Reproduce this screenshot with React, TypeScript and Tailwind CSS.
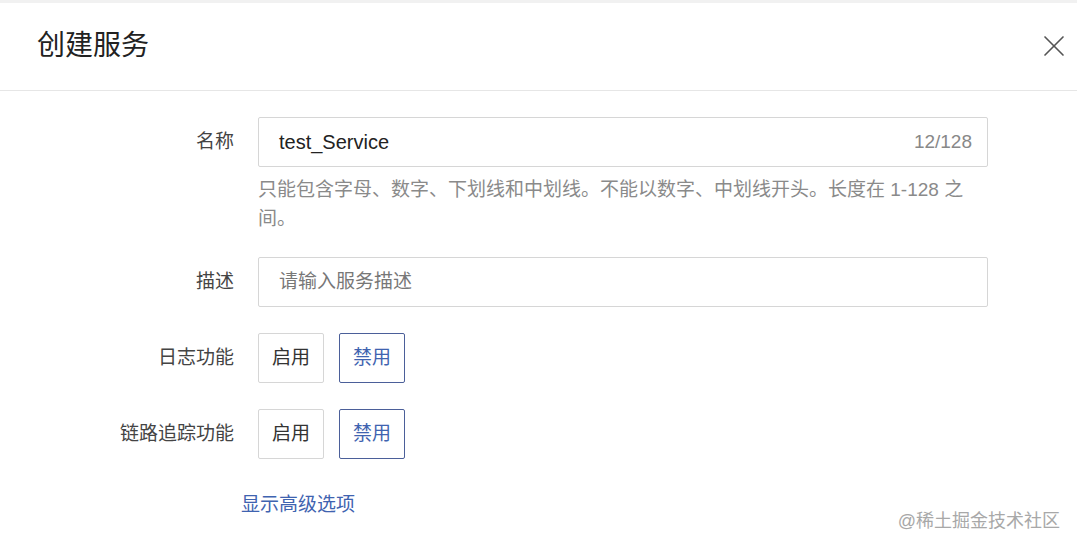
import { X } from "lucide-react";

const font = { fontFamily: '"Liberation Sans", "Noto Sans CJK SC", sans-serif' };

function Toggle({ value }: { value: "on" | "off" }) {
  return (
    <div className="flex gap-[15px]">
      <button
        className={`w-[66px] h-[50px] border text-[19px] rounded-[2px] ${
          value === "on" ? "border-[#4b5f99] text-[#3f63b0]" : "border-[#d6d6d6] text-[#333]"
        }`}
      >
        启用
      </button>
      <button
        className={`w-[66px] h-[50px] border text-[19px] rounded-[2px] ${
          value === "off" ? "border-[#4b5f99] text-[#3f63b0]" : "border-[#d6d6d6] text-[#333]"
        }`}
      >
        禁用
      </button>
    </div>
  );
}

function Row({ label, children, align = "center" }: { label: string; children: React.ReactNode; align?: "center" | "start" }) {
  return (
    <div className={`flex ${align === "start" ? "items-start" : "items-center"}`}>
      <div className={`w-[234px] text-right text-[19px] text-[#444] ${align === "start" ? "leading-[50px]" : ""}`}>{label}</div>
      <div className="ml-[24px] w-[730px]">{children}</div>
    </div>
  );
}

export default function App() {
  return (
    <div className="relative w-[1077px] h-[550px] bg-white overflow-hidden" style={font}>
      <div className="h-[3px] bg-[#f1f1f1]" />
      {/* Header */}
      <div className="h-[88px] border-b border-[#e6e6e6] flex items-center justify-between pl-[37px] pr-[5px]">
        <h2 className="text-[28px] text-[#222] pb-[2px]">创建服务</h2>
        <X className="w-[36px] h-[36px] text-[#555] mb-[2px]" strokeWidth={1.1} />
      </div>

      {/* Form */}
      <div className="pt-[26px] flex flex-col">
        <Row label="名称" align="start">
          <div className="h-[50px] border border-[#d6d6d6] rounded-[2px] flex items-center justify-between px-[20px]">
            <span className="text-[20px] text-[#222]">test_Service</span>
            <span className="text-[19px] text-[#888] -mr-[5px]">12/128</span>
          </div>
          <p className="mt-[8px] w-[715px] text-[19px] leading-[29px] text-[#8a8a8a]">
            只能包含字母、数字、下划线和中划线。不能以数字、中划线开头。长度在 1-128 之间。
          </p>
        </Row>
        <div className="mt-[24px]">
          <Row label="描述">
            <div className="h-[50px] border border-[#d6d6d6] rounded-[2px] flex items-center px-[20px]">
              <span className="text-[19px] text-[#777]">请输入服务描述</span>
            </div>
          </Row>
        </div>
        <div className="mt-[26px]">
          <Row label="日志功能">
            <Toggle value="off" />
          </Row>
        </div>
        <div className="mt-[26px]">
          <Row label="链路追踪功能">
            <Toggle value="off" />
          </Row>
        </div>
        <div className="mt-[32px] pl-[241px]">
          <a className="text-[19px] leading-[27px] text-[#3f63b0]">显示高级选项</a>
        </div>
      </div>

      <div className="absolute right-[17px] bottom-[15px] text-[18px] text-[#a8a8a8]">@稀土掘金技术社区</div>
    </div>
  );
}
